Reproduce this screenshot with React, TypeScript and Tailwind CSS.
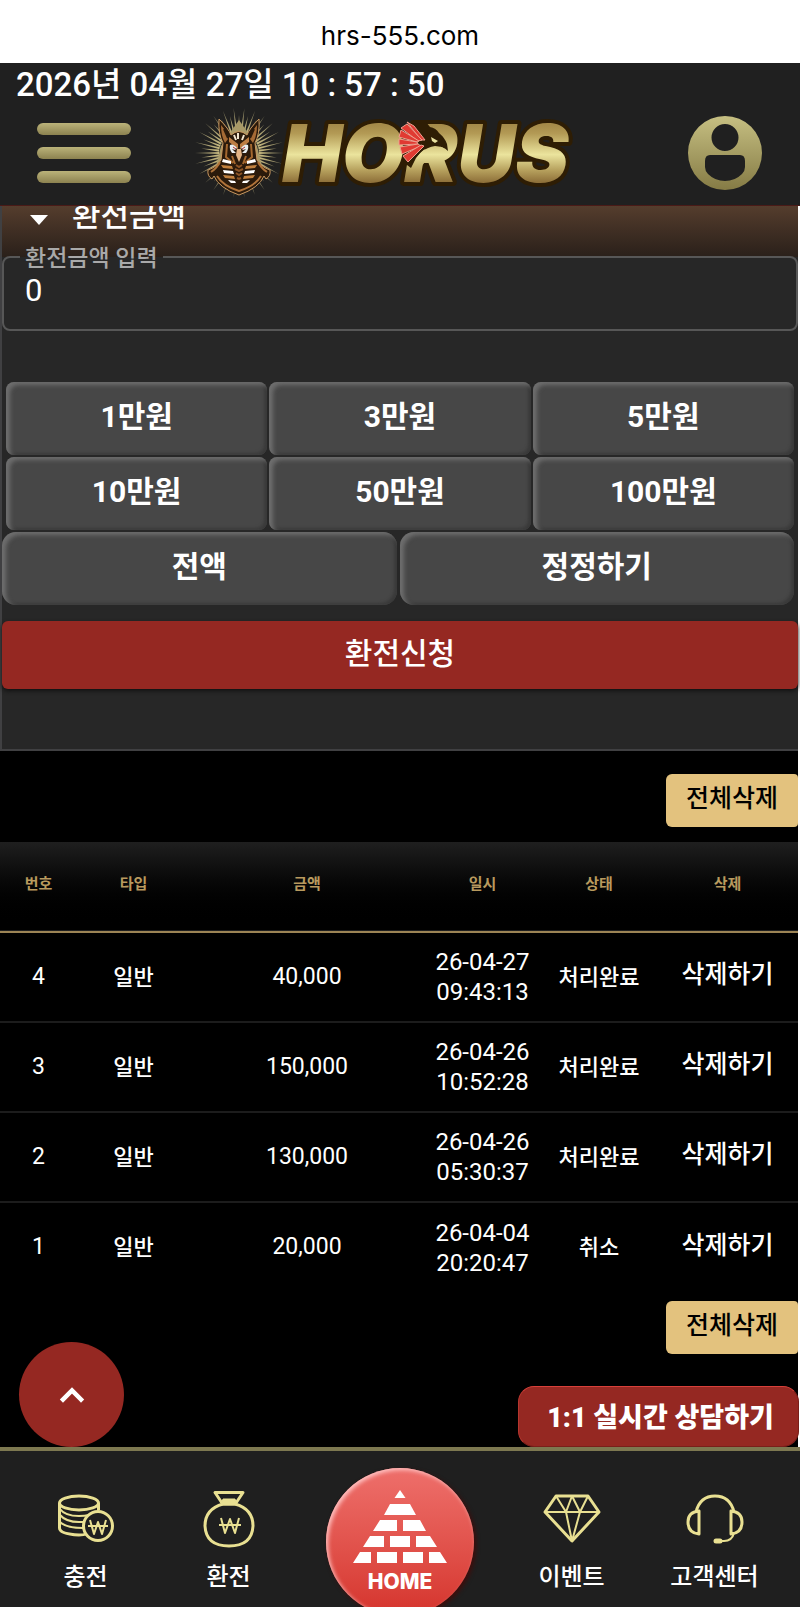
import React from 'react';
import { ChevronUp } from 'lucide-react';
import clsx from 'clsx';

interface Withdrawal {
  no: number;
  type: string;
  amount: string;
  date: string;
  time: string;
  status: string;
}

const WITHDRAWALS: Withdrawal[] = [
  { no: 4, type: '일반', amount: '40,000', date: '26-04-27', time: '09:43:13', status: '처리완료' },
  { no: 3, type: '일반', amount: '150,000', date: '26-04-26', time: '10:52:28', status: '처리완료' },
  { no: 2, type: '일반', amount: '130,000', date: '26-04-26', time: '05:30:37', status: '처리완료' },
  { no: 1, type: '일반', amount: '20,000', date: '26-04-04', time: '20:20:47', status: '취소' },
];

const AMOUNTS = ['1만원', '3만원', '5만원', '10만원', '50만원', '100만원'];

const RAYS = Array.from({ length: 52 }, (_, i) => {
  const angle = (i / 52) * Math.PI * 2;
  const length = i % 2 === 0 ? 45 : 38;
  const point = (a: number, r: number) =>
    `${(44 + Math.cos(a) * r).toFixed(1)},${(45 + Math.sin(a) * r).toFixed(1)}`;
  return `${point(angle - 0.055, 20)} ${point(angle, length)} ${point(angle + 0.055, 20)}`;
});

function Logo() {
  return (
    <svg width="380" height="90" viewBox="0 0 380 90" role="img" aria-label="HORUS">
      <defs>
        <linearGradient id="gold" gradientUnits="userSpaceOnUse" x1="0" y1="17" x2="0" y2="74">
          <stop offset="0" stopColor="#a58a49" />
          <stop offset="0.15" stopColor="#b39a55" />
          <stop offset="0.52" stopColor="#ebe49d" />
          <stop offset="0.8" stopColor="#b59f5c" />
          <stop offset="1" stopColor="#8f713a" />
        </linearGradient>
        <radialGradient id="rays" gradientUnits="userSpaceOnUse" cx="44" cy="45" r="44">
          <stop offset="0.4" stopColor="#cdbf83" />
          <stop offset="1" stopColor="#a39a70" stopOpacity="0.8" />
        </radialGradient>
      </defs>

      {RAYS.map((points) => (
        <polygon key={points} points={points} fill="url(#rays)" />
      ))}
      <path d="M44 12 L62 38 L68 62 L44 74 L20 62 L26 38 Z" fill="#a99a68" />

      {/* jackal-eared pharaoh */}
      <path
        d="M24 11 Q34 21 36 27 Q44 20 52 27 Q54 21 64 11 Q65 26 60 35 L62 52 Q66 59 75 62 Q76 68 71 71 L69 68 Q64 80 44 87 Q24 80 19 68 L17 71 Q12 68 13 62 Q22 59 26 52 L28 35 Q23 26 24 11 Z"
        fill="#2b1a0b"
        stroke="#c99860"
        strokeWidth="1"
      />
      <path d="M26 17 Q32 24 33 31 L30 35 Q26 28 26 17 Z M62 17 Q56 24 55 31 L58 35 Q62 28 62 17 Z" fill="#a66a35" />
      <path d="M29 21 L33 30 M59 21 L55 30" stroke="#2b1a0b" strokeWidth="2" />
      <path d="M43 25 L43 31 M39 27 L41 32 M49 27 L47 32" stroke="#f3e6d0" strokeWidth="2" />
      <path d="M34 29 L43 36 L43 41 L34 34 Z M54 29 L45 36 L45 41 L54 34 Z" fill="#bd7d43" />
      <path d="M35 37 Q38 35 42 40 L40 42 L37 41 L41 45 L37 45 Q34 41 35 37 Z M53 37 Q50 35 46 40 L48 42 L51 41 L47 45 L51 45 Q54 41 53 37 Z" fill="#e9eef0" />
      <path d="M38 39 L41 41 M50 39 L47 41" stroke="#b3302a" strokeWidth="1" />
      <path d="M42 41 L46 41 L47 47 L44 54 L41 47 Z" fill="#e3b384" />
      <path d="M32 36 L31 49 L38 55 M56 36 L57 49 L50 55 M37 48 L40 56 M51 48 L48 56" stroke="#a5682f" strokeWidth="2" fill="none" />
      <path d="M28 51 L36 53 L36 56 L27 54 Z M60 51 L52 53 L52 56 L61 54 Z" fill="#fff" />
      <path d="M26 57 L37 58 L38 61 L28 60 Z M62 57 L51 58 L50 61 L60 60 Z" fill="#c1813f" />
      <path d="M28 62 L38 63 L39 66 L29 65 Z M60 62 L50 63 L49 66 L59 65 Z" fill="#fff" />
      <path d="M28 67 L39 68 L40 71 L30 70 Z M60 67 L49 68 L48 71 L58 70 Z" fill="#c1813f" />
      <path d="M33 72 L40 73 L41 75 L36 75 Z M55 72 L48 73 L47 75 L52 75 Z" fill="#fff" />
      <path d="M41 57 L44 59 L47 57 M40 61 L44 63 L48 61 M41 65 L44 67 L47 65 M42 70 L44 71 L46 70" stroke="#8d5527" strokeWidth="2" fill="none" />
      <path d="M25 54 Q22 60 16 64 M63 54 Q66 60 72 64 M22 68 Q28 78 44 83 Q60 78 66 68" stroke="#b0733a" strokeWidth="2" fill="none" />

      <text
        x="87"
        y="74"
        fontFamily="Inter, sans-serif"
        fontSize="80"
        fontWeight="900"
        fontStyle="italic"
        fill="url(#gold)"
        stroke="#2e1d04"
        strokeWidth="8"
        strokeLinejoin="round"
        paintOrder="stroke"
      >
        HORUS
      </text>

      {/* falcon head laid over the R */}
      <path
        d="M213 15 L227 16 L231 14 L235 19 Q241 20 244 25 Q250 30 252 36 L253 43 Q248 38 240 38 Q229 39 221 50 L216 60 L208 54 Z"
        fill="#2e1d04"
      />
      <path d="M219 56 Q225 40 240 38 Q248 38 253 44 Q242 45 235 50 Q229 54 226 59 Z" fill="url(#gold)" />
      <path d="M236 29 L243 33 L240 35 L237 33 Z" fill="#e9e2a0" />
      <g fill="#e03a32" stroke="#f0a090" strokeWidth="1">
        <path d="M212 14 L219 18 L230 32 L226 32 Z" />
        <path d="M206 20 L212 16 L227 32 L223 33 Z" />
        <path d="M204 29 L206 22 L224 33 L222 34 Z" />
        <path d="M204 37 L204 31 L222 34 L223 36 Z" />
        <path d="M207 46 L205 39 L223 36 L226 38 Z" />
        <path d="M213 54 L208 48 L226 37 L229 38 Z" />
      </g>
    </svg>
  );
}

function UserIcon() {
  return (
    <svg width="76" height="76" viewBox="0 0 76 76" aria-hidden="true">
      <defs>
        <linearGradient id="olive" x1="0" y1="0" x2="0" y2="1">
          <stop offset="0" stopColor="#c6bf82" />
          <stop offset="1" stopColor="#857b45" />
        </linearGradient>
      </defs>
      <path
        fillRule="evenodd"
        fill="url(#olive)"
        d="M38 1 A37 37 0 1 1 38 75 A37 37 0 1 1 38 1 Z M38 9 A13.5 13.5 0 1 0 38 36 A13.5 13.5 0 1 0 38 9 Z M23 40 Q18 40 18 46 L18 52 Q18 56 21 59 Q28 66 38 66 Q48 66 55 59 Q58 56 58 52 L58 46 Q58 40 53 40 Z"
      />
    </svg>
  );
}

function IconFrame({ children }: { children: React.ReactNode }) {
  return (
    <svg width="60" height="60" viewBox="0 0 60 60" fill="none" stroke="#e9e092" strokeWidth="3" strokeLinejoin="round" aria-hidden="true">
      {children}
    </svg>
  );
}

function CoinsIcon() {
  return (
    <IconFrame>
      <ellipse cx="23" cy="12" rx="19.5" ry="7" />
      <path d="M3.500 12 V37 Q3.500 43 23 44 Q28 44 30 43 M42.500 12 V19" />
      <path d="M4 18 Q9 25 23 25 Q29 25 33 24 M4 24 Q10 31 23 31 L29 31 M4 31 Q10 37 27 37" strokeWidth="2" />
      <circle cx="42" cy="35" r="14.500" />
      <path d="M34 29 L38 43 L42 31 L46 43 L50 29 M32 35 H52" strokeWidth="2" />
    </IconFrame>
  );
}

function BagIcon() {
  return (
    <IconFrame>
      <path d="M16 1.500 H44 L37 12 H23 Z" />
      <path d="M24 8 H36 L38 14 H22 Z" fill="#e9e092" strokeWidth="1" />
      <path d="M24 13 Q6 18 6 35 Q7 55 30 55 Q53 55 54 35 Q54 18 36 13 Z" />
      <path d="M22 27 L26 42 L31 28 L36 42 L40 27 M20 34 H42" strokeWidth="2" />
    </IconFrame>
  );
}

function DiamondIcon() {
  return (
    <IconFrame>
      <path d="M14 5 H46 L57 21 L30 50 L3 21 Z" />
      <path d="M3 21 H57 M14 5 L24 21 L30 5 L38 21 L46 5 M24 21 L30 50 L38 21" strokeWidth="2" />
    </IconFrame>
  );
}

function HeadsetIcon() {
  return (
    <IconFrame>
      <path d="M11 21 Q15 5 30 5 Q45 5 49 21" />
      <path d="M14 20 V43 Q3 42 3 31 Q3 21 14 20 Z M46 20 V43 Q57 42 57 31 Q57 21 46 20 Z" />
      <path d="M49 42 Q47 50 39 50 H34" strokeWidth="2" />
      <path d="M31 50 H35" strokeWidth="5" strokeLinecap="round" />
    </IconFrame>
  );
}

function PyramidIcon() {
  return (
    <svg width="94" height="74" viewBox="0 0 94 74" fill="#fff" aria-hidden="true">
      <path d="M47 0 L52.500 8 H41.500 Z" />
      <path d="M37 14 H57 L63 25 H31 Z" />
      <path d="M27 30 H44 V41 H20 Z M50 30 H67 L73 41 H50 Z" />
      <path d="M17 46 H31 V57 H10 Z M37 46 H57 V57 H37 Z M63 46 H77 L84 57 H63 Z" />
      <path d="M7 62 H18 V73 H0 Z M24 62 H44 V73 H24 Z M50 62 H70 V73 H50 Z M76 62 H87 L94 73 H76 Z" />
    </svg>
  );
}

function KeyButton({ label, round }: { label: string; round?: boolean }) {
  return (
    <button
      type="button"
      className={clsx(
        'h-[73px] pb-1 bg-[#474747] text-white text-[30px] font-bold',
        'shadow-[inset_4px_3px_4px_#6e6e6e,inset_-3px_-2px_3px_#3a3a3a]',
        round ? 'rounded-[14px]' : 'rounded-lg'
      )}
    >
      {label}
    </button>
  );
}

function DeleteAllButton() {
  return (
    <button type="button" className="h-[53px] w-[132px] pb-1 rounded-l-md rounded-r-sm bg-[#e3c27e] text-black text-[25px] font-medium">
      전체삭제
    </button>
  );
}

function HistoryTable() {
  return (
    <table className="w-full table-fixed text-center text-white text-[22px]">
      <thead>
        <tr className="h-[90px] bg-linear-to-b from-[#1f1f1f] to-black border-b-2 border-[#9c8455] text-[15px] text-[#b89a5e]">
          <th className="w-[77px] pb-1">번호</th>
          <th className="w-[113px] pb-1">타입</th>
          <th className="pb-1">금액</th>
          <th className="w-[117px] pb-1">일시</th>
          <th className="w-[116px] pb-1">상태</th>
          <th className="w-[141px] pb-1">삭제</th>
        </tr>
      </thead>
      <tbody className="font-medium">
        {WITHDRAWALS.map((item) => (
          <tr key={item.no} className="h-[90px] border-b-2 border-[#1c1c1c] last:border-b-0">
            <td className="text-[23px] font-normal">{item.no}</td>
            <td>{item.type}</td>
            <td className="text-[23px] font-normal">{item.amount}</td>
            <td className="text-2xl leading-[30px] font-normal">
              {item.date}
              <br />
              {item.time}
            </td>
            <td>{item.status}</td>
            <td className="pb-1">
              <button type="button" className="text-[25px]">삭제하기</button>
            </td>
          </tr>
        ))}
      </tbody>
    </table>
  );
}

function NavItem({ label, children }: { label: string; children: React.ReactNode }) {
  return (
    <a href="#" className="w-[143px] pt-10 flex flex-col items-center gap-2 text-white text-2xl leading-9 font-medium">
      {children}
      {label}
    </a>
  );
}

export default function App() {
  return (
    <div className="min-h-screen flex flex-col bg-white font-['Roboto','Noto_Sans_CJK_KR',sans-serif]">
      <div className="h-[63px] pt-2 flex items-center justify-center text-[26px] text-black font-['Inter',sans-serif]">
        hrs-555.com
      </div>

      <header className="bg-[#202020] border-b border-[#4a1a17]">
        <p className="px-4 h-[42px] text-[33px] leading-11 font-medium text-white">2026년 04월 27일 10 : 57 : 50</p>
        <div className="h-[100px] px-[37px] pb-1 flex items-center gap-16">
          <button type="button" aria-label="메뉴" className="w-[94px] flex flex-col gap-3">
            <span className="h-3 w-full rounded-full bg-linear-to-b from-[#bbb37a] to-[#8c8250]" />
            <span className="h-3 w-full rounded-full bg-linear-to-b from-[#bbb37a] to-[#8c8250]" />
            <span className="h-3 w-full rounded-full bg-linear-to-b from-[#bbb37a] to-[#8c8250]" />
          </button>
          <a href="#"><Logo /></a>
          <button type="button" aria-label="내 정보" className="ml-auto"><UserIcon /></button>
        </div>
      </header>

      <main className="relative grow mr-[2px] bg-black">
        <form className="bg-[#272727] border-l-2 border-b-2 border-[#404042] pb-[60px]">
          <h2 className="h-[51px] overflow-hidden pl-7 flex items-start gap-6 bg-linear-to-b from-[#553d2d] to-[#2a201a] text-white text-[31px] leading-5 font-medium">
            <svg width="18" height="28" viewBox="0 0 18 28" fill="#fff" aria-hidden="true">
              <path d="M0 9 H18 L9 19 Z" />
            </svg>
            환전금액
          </h2>
          <fieldset className="-mt-3 relative h-[86px] border-2 border-[#575757] rounded-lg px-4">
            <legend className="px-[5px] h-6 text-[23px] leading-7 font-medium text-[#a9a9a9]">
              <label htmlFor="amount">환전금액 입력</label>
            </legend>
            <input
              id="amount"
              type="text"
              defaultValue="0"
              className="w-full h-11 px-[5px] text-[31px] leading-11 text-white bg-transparent outline-none"
            />
          </fieldset>

          <div className="mt-[51px] px-1 grid grid-cols-3 gap-x-[2px] gap-y-[2px]">
            {AMOUNTS.map((label) => (
              <KeyButton key={label} label={label} />
            ))}
          </div>
          <div className="mt-[2px] pr-1 grid grid-cols-2 gap-x-[3px]">
            <KeyButton label="전액" round />
            <KeyButton label="정정하기" round />
          </div>

          <button
            type="submit"
            className="mt-4 w-full h-[68px] pb-1 rounded-md bg-[#952822] text-white text-[30px] font-medium shadow-[0_2px_4px_#111]"
          >
            환전신청
          </button>
        </form>

        <div className="pt-[23px] pb-[15px] flex justify-end">
          <DeleteAllButton />
        </div>
        <HistoryTable />
        <div className="pt-[9px] pb-[92px] flex justify-end">
          <DeleteAllButton />
        </div>

        <button
          type="button"
          aria-label="맨 위로"
          className="absolute left-[19px] bottom-0 size-[105px] rounded-full bg-[#952822] text-white flex items-center justify-center"
        >
          <ChevronUp size={36} strokeWidth={3} strokeLinecap="square" strokeLinejoin="miter" />
        </button>
        <button
          type="button"
          className="absolute -right-px bottom-0 w-[281px] h-[61px] pt-1 pl-1 rounded-2xl bg-[#952822] border border-t-[#d8403a] border-l-[#b5352e] border-r-[#7a1f1a] border-b-[#7a1f1a] text-white text-[27px] font-black"
        >
          1:1 실시간 상담하기
        </button>
      </main>

      <nav className="h-[160px] overflow-hidden px-[14px] flex items-start bg-[#1f1f1f] border-t-4 border-[#7d7850]">
        <NavItem label="충전"><CoinsIcon /></NavItem>
        <NavItem label="환전"><BagIcon /></NavItem>
        <div className="grow pt-[17px] flex justify-center">
          <a
            href="#"
            className="size-[148px] shrink-0 rounded-full pt-[22px] flex flex-col items-center gap-[6px] bg-linear-to-b from-[#ee6f6b] to-[#d5332c] shadow-[inset_2px_2px_4px_#ffc4c4,2px_2px_4px_#400c0a] text-white text-[21px] leading-6 font-extrabold font-['Inter',sans-serif]"
          >
            <PyramidIcon />
            HOME
          </a>
        </div>
        <NavItem label="이벤트"><DiamondIcon /></NavItem>
        <NavItem label="고객센터"><HeadsetIcon /></NavItem>
      </nav>
    </div>
  );
}
